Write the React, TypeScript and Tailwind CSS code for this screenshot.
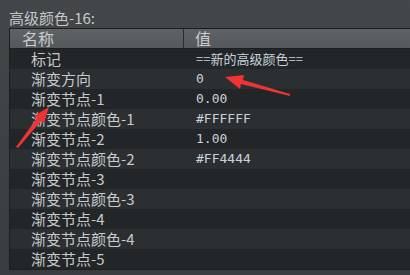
import React from 'react';

const rows: [string, string][] = [
  ['标记', '==新的高级颜色=='],
  ['渐变方向', '0'],
  ['渐变节点-1', '0.00'],
  ['渐变节点颜色-1', '#FFFFFF'],
  ['渐变节点-2', '1.00'],
  ['渐变节点颜色-2', '#FF4444'],
  ['渐变节点-3', ''],
  ['渐变节点颜色-3', ''],
  ['渐变节点-4', ''],
  ['渐变节点颜色-4', ''],
  ['渐变节点-5', ''],
];

const cjk = "font-['Noto_Sans_CJK_SC',sans-serif]";

export default function App() {
  return (
    <div className="relative w-[410px] h-[275px] overflow-hidden bg-gradient-to-b from-[#43474a] to-[#3a3d40] flex">
      <div className="w-[2px] bg-[#2a2c2e]" />
      <div className="w-px bg-[#55595c]" />
      <div className="flex-1 flex flex-col">
        <div className={`h-[28px] pl-[9px] pt-[9px] text-[15px] leading-[18px] text-[#c4c8ca] ${cjk}`}>
          高级颜色-16:
        </div>
        <div className="ml-[9px] w-[420px] border border-[#1c1e20] border-r-0">
          <div className="flex h-[20px] bg-gradient-to-b from-[#5e6264] to-[#55595b] border-b border-[#1c1e20] text-[#c8ccce] text-[16px] leading-[19px]">
            <div className={`w-[174px] pl-[12px] border-r border-[#2a2c2e] ${cjk}`}>名称</div>
            <div className={`flex-1 pl-[11px] ${cjk}`}>值</div>
          </div>
          {rows.map(([name, value], i) => (
            <div
              key={name}
              className={`flex h-[20px] items-center ${i % 2 === 0 ? 'bg-[#232628]' : 'bg-[#2b2f32]'}`}
            >
              <div className={`w-[174px] pl-[21px] text-[15px] leading-[20px] text-[#c6cacc] ${cjk}`}>{name}</div>
              <div
                className={`flex-1 pl-[12px] text-[13px] leading-[20px] text-[#c8d2da] ${
                  i === 0 ? cjk : "font-['DejaVu_Sans_Mono',monospace]"
                }`}
              >
                {value}
              </div>
            </div>
          ))}
        </div>
      </div>
      <svg className="absolute left-0 top-0 pointer-events-none" width="410" height="275">
        <polygon points="16,147 37,118 34,116 49,107 44,123 41,121 18,148" fill="#ee3434" />
        <polygon points="290,94 243,80 244,75 225,77 240,89 241,84 290,96" fill="#ee3434" />
      </svg>
    </div>
  );
}
